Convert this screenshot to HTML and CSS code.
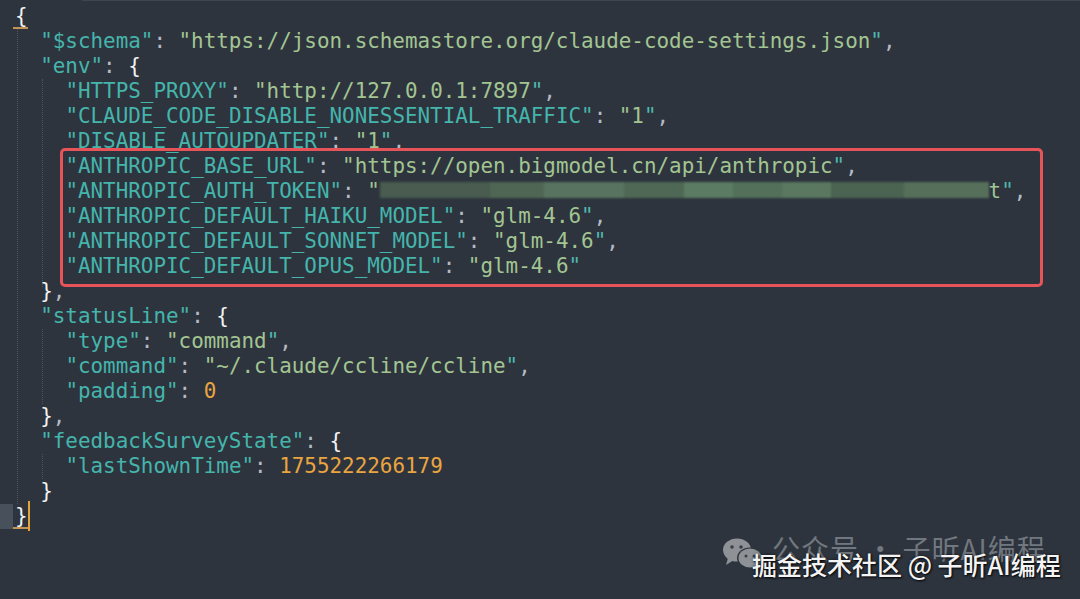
FILE: index.html
```html
<!DOCTYPE html>
<html lang="zh">
<head>
<meta charset="utf-8">
<title>settings.json</title>
<link rel="stylesheet" href="styles.css">
</head>
<body>
<div class="tabline"></div>
<div class="editor">
  <div class="ln"><span class="brace match">{</span></div>
  <div class="blk">
    <div class="ln"><span class="k">"$schema"</span><span class="p">: </span><span class="s">"https://json.schemastore.org/claude-code-settings.json<span class="q">"</span></span><span class="p">,</span></div>
    <div class="ln"><span class="k">"env"</span><span class="p">: </span><span class="brace">{</span></div>
    <div class="blk">
      <div class="ln"><span class="k">"HTTPS_PROXY"</span><span class="p">: </span><span class="s">"http://127.0.0.1:7897<span class="q">"</span></span><span class="p">,</span></div>
      <div class="ln"><span class="k">"CLAUDE_CODE_DISABLE_NONESSENTIAL_TRAFFIC"</span><span class="p">: </span><span class="s">"1<span class="q">"</span></span><span class="p">,</span></div>
      <div class="ln"><span class="k">"DISABLE_AUTOUPDATER"</span><span class="p">: </span><span class="s">"1<span class="q">"</span></span><span class="p">,</span></div>
      <div class="annot">
        <div class="ln"><span class="k">"ANTHROPIC_BASE_URL"</span><span class="p">: </span><span class="s">"https://open.bigmodel.cn/api/anthropic<span class="q">"</span></span><span class="p">,</span></div>
        <div class="ln"><span class="k">"ANTHROPIC_AUTH_TOKEN"</span><span class="p">: </span><span class="s">"<span class="redact"></span>t<span class="q">"</span></span><span class="p">,</span></div>
        <div class="ln"><span class="k">"ANTHROPIC_DEFAULT_HAIKU_MODEL"</span><span class="p">: </span><span class="s">"glm-4.6<span class="q">"</span></span><span class="p">,</span></div>
        <div class="ln"><span class="k">"ANTHROPIC_DEFAULT_SONNET_MODEL"</span><span class="p">: </span><span class="s">"glm-4.6<span class="q">"</span></span><span class="p">,</span></div>
        <div class="ln"><span class="k">"ANTHROPIC_DEFAULT_OPUS_MODEL"</span><span class="p">: </span><span class="s">"glm-4.6<span class="q">"</span></span></div>
      </div>
    </div>
    <div class="ln"><span class="brace">}</span><span class="p">,</span></div>
    <div class="ln"><span class="k">"statusLine"</span><span class="p">: </span><span class="brace">{</span></div>
    <div class="blk">
      <div class="ln"><span class="k">"type"</span><span class="p">: </span><span class="s">"command<span class="q">"</span></span><span class="p">,</span></div>
      <div class="ln"><span class="k">"command"</span><span class="p">: </span><span class="s">"~/.claude/ccline/ccline<span class="q">"</span></span><span class="p">,</span></div>
      <div class="ln"><span class="k">"padding"</span><span class="p">: </span><span class="n">0</span></div>
    </div>
    <div class="ln"><span class="brace">}</span><span class="p">,</span></div>
    <div class="ln"><span class="k">"feedbackSurveyState"</span><span class="p">: </span><span class="brace">{</span></div>
    <div class="blk">
      <div class="ln"><span class="k">"lastShownTime"</span><span class="p">: </span><span class="n">1755222266179</span></div>
    </div>
    <div class="ln"><span class="brace">}</span></div>
  </div>
  <div class="ln cur"><span class="brace match">}</span><span class="cursor"></span></div>
</div>

<div class="watermark">
  <div class="wm-top">
    <svg class="wechat" width="42" height="32" viewBox="0 0 42 32" aria-hidden="true">
      <ellipse cx="15" cy="12" rx="14" ry="11.5" fill="#8e9195"/>
      <path d="M6 20 L4 27 L12 22 Z" fill="#8e9195"/>
      <ellipse cx="28" cy="20" rx="13" ry="10.5" fill="#2d343e"/>
      <ellipse cx="28" cy="20" rx="11.5" ry="9.5" fill="#8e9195"/>
      <path d="M34 27 L38 31 L36 25 Z" fill="#8e9195"/>
      <circle cx="10" cy="9" r="1.8" fill="#3a4049"/>
      <circle cx="19" cy="9" r="1.8" fill="#3a4049"/>
      <circle cx="24" cy="18" r="1.5" fill="#3a4049"/>
      <circle cx="32" cy="18" r="1.5" fill="#3a4049"/>
    </svg>
    <span class="wm-gray">公众号 · 子昕AI编程</span>
  </div>
  <div class="wm-white">掘金技术社区 @ 子昕AI编程</div>
</div>
</body>
</html>
```

FILE: styles.css
```css
html, body {
  margin: 0;
  padding: 0;
}
body {
  width: 1080px;
  height: 599px;
  overflow: hidden;
  background: #2d343e;
  position: relative;
}
.tabline {
  height: 1px;
  margin-left: 82px;
  background: #3f4650;
}
.editor {
  padding: 3px 0 0 15px;
  font-family: "DejaVu Sans Mono", "Liberation Mono", monospace;
  font-size: 20.9px;
  line-height: 25px;
  color: #b8bec6;
}
.ln {
  height: 25px;
  white-space: pre;
}
.blk {
  margin-left: 2px;
  padding-left: 22.2px;
  border-left: 1px dotted #4c545e;
}
.k { color: #45b5ac; }
.s { color: #a3c592; }
.q { color: #4fb8ae; }
.p { color: #b5bbc3; }
.n { color: #eaa540; }
.brace { color: #f2f2f2; }
.match {
  display: inline-block;
  height: 25px;
  vertical-align: top;
  box-shadow: inset 0 -2px #c29552;
  padding-left: 2px;
  margin-left: -2px;
}
.cur {
  background: linear-gradient(to right, #48515b 0 13px, transparent 13px);
  margin-left: -15px;
  padding-left: 15px;
}
.cursor {
  display: inline-block;
  width: 2px;
  height: 30px;
  margin-top: -3px;
  vertical-align: top;
  background: #e3a43a;
}
.annot {
  position: relative;
  margin: -6px 37px -8px -5px;
  padding: 3px 0 5px 2px;
  border: 3px solid #e6545a;
  border-radius: 5px;
}
.redact {
  display: inline-block;
  width: 48.4ch;
  height: 16px;
  margin-top: 3px;
  vertical-align: top;
  filter: blur(1px);
  background: linear-gradient(to right,
    #495c4f 0 18%,
    #4f6654 18% 27%,
    #587461 27% 40%,
    #4e6855 40% 50%,
    #5b7b62 50% 58%,
    #52705a 58% 66%,
    #5a785f 66% 74%,
    #4b6351 74% 86%,
    #566f5b 86% 100%);
}
.watermark {
  position: absolute;
  left: 722px;
  top: 535px;
  width: 358px;
  height: 60px;
  font-family: "Noto Sans CJK SC", "Noto Sans", sans-serif;
}
.wm-top {
  display: flex;
  align-items: flex-start;
  gap: 8px;
}
.wechat {
  flex: none;
  margin-top: 3px;
}
.wm-gray {
  font-size: 28px;
  line-height: 32px;
  margin-top: -3px;
  color: rgba(160, 165, 170, 0.6);
  letter-spacing: 1px;
  white-space: nowrap;
}
.wm-white {
  position: absolute;
  left: 30px;
  top: 14px;
  font-size: 25px;
  line-height: 30px;
  font-weight: 500;
  color: #f4f4f4;
  white-space: nowrap;
  text-shadow: 1px 1px 2px rgba(0, 0, 0, 0.85), 0 0 3px rgba(0, 0, 0, 0.6);
}
```
